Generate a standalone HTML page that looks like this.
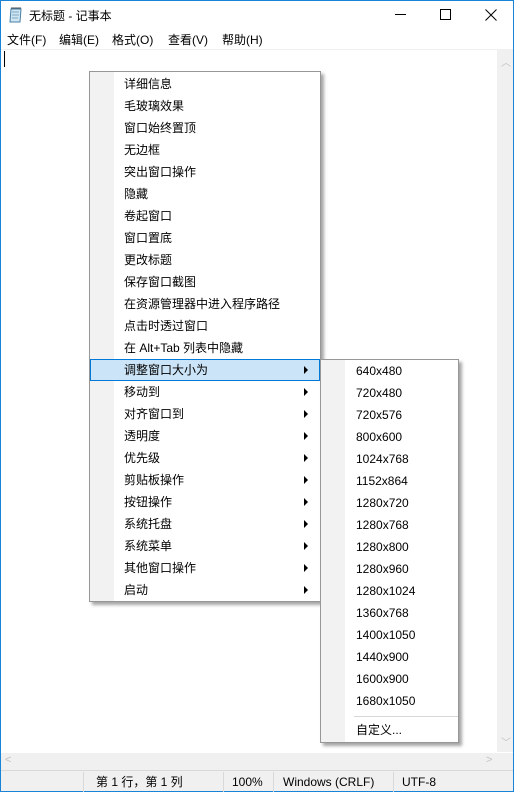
<!DOCTYPE html>
<html><head><meta charset="utf-8">
<style>
*{margin:0;padding:0;box-sizing:border-box}
body{width:514px;height:792px;overflow:hidden;background:#fff;font-family:"Liberation Sans","Noto Sans CJK SC",sans-serif;font-size:12px;color:#000;position:relative}
.abs{position:absolute}
.win{left:0;top:0;width:514px;height:792px;border:1px solid #1883d7}
.t{white-space:nowrap;line-height:22px}
.menu{background:#f0f0f0;border:1px solid #979797;box-shadow:3px 3px 3px rgba(0,0,0,.35)}
.gut{background:#f2f2f2}
.item{position:absolute;height:22px;line-height:22px;white-space:nowrap}
.arr{position:absolute;width:0;height:0;border-top:4px solid transparent;border-bottom:4px solid transparent;border-left:4px solid #000}
</style></head><body>
<div class="abs win"></div>
<svg class="abs" style="left:8px;top:7px" width="16" height="17" viewBox="0 0 16 17">
<path d="M3 2 L13 2 L12 15 L2 15 Z" fill="#cfe6f3" stroke="#4a7ea6" stroke-width="1"/>
<path d="M4 5H11M4 8H11M4 11H10" stroke="#7fa6c2"/>
<path d="M3 1h10" stroke="#555"/>
</svg>
<div class="abs t" style="left:29px;top:5px;line-height:22px">无标题 - 记事本</div>
<div class="abs" style="left:395px;top:14px;width:11px;height:1px;background:#000"></div>
<div class="abs" style="left:440px;top:9px;width:11px;height:11px;border:1px solid #000"></div>
<svg class="abs" style="left:485px;top:9px" width="12" height="12"><path d="M0.5 0.5L11.5 11.5M11.5 0.5L0.5 11.5" stroke="#000" stroke-width="1"/></svg>
<div class="abs t" style="left:7px;top:29px">文件(F)</div>
<div class="abs t" style="left:59px;top:29px">编辑(E)</div>
<div class="abs t" style="left:112px;top:29px">格式(O)</div>
<div class="abs t" style="left:168px;top:29px">查看(V)</div>
<div class="abs t" style="left:222px;top:29px">帮助(H)</div>
<div class="abs" style="left:1px;top:49px;width:512px;height:1px;background:#f0f0f0"></div>
<div class="abs" style="left:4px;top:51px;width:1px;height:16px;background:#000"></div>
<div class="abs" style="left:497px;top:49px;width:16px;height:703px;background:#f0f0f0"></div>
<div class="abs" style="left:501px;top:54px;color:#c0c0c0;font-size:10px">︿</div>
<div class="abs" style="left:501px;top:734px;color:#c0c0c0;font-size:10px">﹀</div>
<div class="abs" style="left:1px;top:753px;width:512px;height:17px;background:#f0f0f0"></div>
<div class="abs" style="left:5px;top:754px;color:#c0c0c0;font-size:11px">&lt;</div>
<div class="abs" style="left:486px;top:754px;color:#c0c0c0;font-size:11px">&gt;</div>
<div class="abs" style="left:1px;top:770px;width:512px;height:21px;background:#f0f0f0;border-top:1px solid #d9d9d9"></div>
<div class="abs" style="left:83px;top:772px;width:1px;height:20px;background:#d9d9d9"></div>
<div class="abs" style="left:223px;top:772px;width:1px;height:20px;background:#d9d9d9"></div>
<div class="abs" style="left:273px;top:772px;width:1px;height:20px;background:#d9d9d9"></div>
<div class="abs" style="left:393px;top:772px;width:1px;height:20px;background:#d9d9d9"></div>
<div class="abs t" style="left:96px;top:771px">第 1 行，第 1 列</div>
<div class="abs t" style="left:232px;top:771px">100%</div>
<div class="abs t" style="left:283px;top:771px">Windows (CRLF)</div>
<div class="abs t" style="left:402px;top:771px">UTF-8</div>

<div class="abs menu" style="left:89px;top:71px;width:232px;height:531px;background:#fff">
 <div class="abs gut" style="left:0;top:0;width:24px;height:529px"></div>
</div>
<div class="abs" style="left:90px;top:359px;width:230px;height:22px;background:#cce4f7;border:1px solid #0078d7"></div>
<div class="abs" style="left:124px;top:73px">
<div class="item" style="top:0">详细信息</div>
<div class="item" style="top:22px">毛玻璃效果</div>
<div class="item" style="top:44px">窗口始终置顶</div>
<div class="item" style="top:66px">无边框</div>
<div class="item" style="top:88px">突出窗口操作</div>
<div class="item" style="top:110px">隐藏</div>
<div class="item" style="top:132px">卷起窗口</div>
<div class="item" style="top:154px">窗口置底</div>
<div class="item" style="top:176px">更改标题</div>
<div class="item" style="top:198px">保存窗口截图</div>
<div class="item" style="top:220px">在资源管理器中进入程序路径</div>
<div class="item" style="top:242px">点击时透过窗口</div>
<div class="item" style="top:264px">在 Alt+Tab 列表中隐藏</div>
<div class="item" style="top:286px">调整窗口大小为</div>
<div class="item" style="top:308px">移动到</div>
<div class="item" style="top:330px">对齐窗口到</div>
<div class="item" style="top:352px">透明度</div>
<div class="item" style="top:374px">优先级</div>
<div class="item" style="top:396px">剪贴板操作</div>
<div class="item" style="top:418px">按钮操作</div>
<div class="item" style="top:440px">系统托盘</div>
<div class="item" style="top:462px">系统菜单</div>
<div class="item" style="top:484px">其他窗口操作</div>
<div class="item" style="top:506px">启动</div>
</div>
<div class="arr" style="left:304px;top:366px"></div>
<div class="arr" style="left:304px;top:388px"></div>
<div class="arr" style="left:304px;top:410px"></div>
<div class="arr" style="left:304px;top:432px"></div>
<div class="arr" style="left:304px;top:454px"></div>
<div class="arr" style="left:304px;top:476px"></div>
<div class="arr" style="left:304px;top:498px"></div>
<div class="arr" style="left:304px;top:520px"></div>
<div class="arr" style="left:304px;top:542px"></div>
<div class="arr" style="left:304px;top:564px"></div>
<div class="arr" style="left:304px;top:586px"></div>

<div class="abs menu" style="left:320px;top:359px;width:139px;height:384px;background:#fff">
 <div class="abs gut" style="left:0;top:0;width:24px;height:382px"></div>
 <div class="abs" style="left:33px;top:356px;width:104px;height:1px;background:#d7d7d7"></div>
</div>
<div class="abs" style="left:356px;top:360px">
<div class="item" style="top:0">640x480</div>
<div class="item" style="top:22px">720x480</div>
<div class="item" style="top:44px">720x576</div>
<div class="item" style="top:66px">800x600</div>
<div class="item" style="top:88px">1024x768</div>
<div class="item" style="top:110px">1152x864</div>
<div class="item" style="top:132px">1280x720</div>
<div class="item" style="top:154px">1280x768</div>
<div class="item" style="top:176px">1280x800</div>
<div class="item" style="top:198px">1280x960</div>
<div class="item" style="top:220px">1280x1024</div>
<div class="item" style="top:242px">1360x768</div>
<div class="item" style="top:264px">1400x1050</div>
<div class="item" style="top:286px">1440x900</div>
<div class="item" style="top:308px">1600x900</div>
<div class="item" style="top:330px">1680x1050</div>
<div class="item" style="top:359px">自定义...</div>
</div>
</body></html>
